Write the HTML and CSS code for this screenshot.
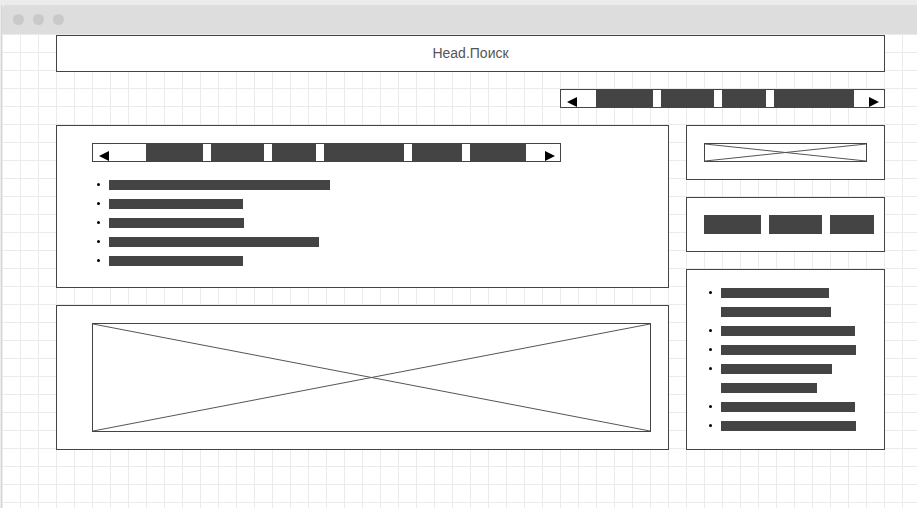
FILE: index.html
```html
<!DOCTYPE html>
<html lang="ru">
<head>
	<meta charset="UTF-8">
	<title>Макет</title>
	<link rel="stylesheet" href="styles.css">
</head>
<body>

	<div class="window">
		<div class="titlebar">
			<span class="dot"></span>
			<span class="dot"></span>
			<span class="dot"></span>
		</div>

		<div class="canvas">
			<div class="page">

				<div class="head">Head.Поиск</div>

				<div class="toolbar">
					<div class="tabs tabs-top">
						<span class="nav-prev"></span>
						<span class="tab w57"></span>
						<span class="tab w53"></span>
						<span class="tab w44"></span>
						<span class="tab w80"></span>
						<span class="nav-next"></span>
					</div>
				</div>

				<div class="main">
					<div class="col-left">
						<div class="box box-content">
							<div class="tabs tabs-wide">
								<span class="nav-prev"></span>
								<span class="tab w57"></span>
								<span class="tab w53"></span>
								<span class="tab w44"></span>
								<span class="tab w80"></span>
								<span class="tab w50"></span>
								<span class="tab w56"></span>
								<span class="nav-next"></span>
							</div>
							<ul class="bullets">
								<li><div class="lines"><span class="bar" style="width: 221px"></span></div></li>
								<li><div class="lines"><span class="bar" style="width: 134px"></span></div></li>
								<li><div class="lines"><span class="bar" style="width: 135px"></span></div></li>
								<li><div class="lines"><span class="bar" style="width: 210px"></span></div></li>
								<li><div class="lines"><span class="bar" style="width: 134px"></span></div></li>
							</ul>
						</div>

						<div class="box box-banner">
							<div class="picture picture-big">
								<svg viewBox="0 0 100 100" preserveAspectRatio="none">
									<line x1="0" y1="0" x2="100" y2="100"/>
									<line x1="0" y1="100" x2="100" y2="0"/>
								</svg>
							</div>
						</div>
					</div>

					<div class="col-right">
						<div class="box box-small">
							<div class="picture picture-small">
								<svg viewBox="0 0 100 100" preserveAspectRatio="none">
									<line x1="0" y1="0" x2="100" y2="100"/>
									<line x1="0" y1="100" x2="100" y2="0"/>
								</svg>
							</div>
						</div>

						<div class="box box-small">
							<div class="buttons">
								<span class="btn w57"></span>
								<span class="btn w53"></span>
								<span class="btn w44"></span>
							</div>
						</div>

						<div class="box box-list">
							<ul class="bullets">
								<li><div class="lines"><span class="bar" style="width: 108px"></span><span class="bar" style="width: 110px"></span></div></li>
								<li><div class="lines"><span class="bar" style="width: 134px"></span></div></li>
								<li><div class="lines"><span class="bar" style="width: 135px"></span></div></li>
								<li><div class="lines"><span class="bar" style="width: 111px"></span><span class="bar" style="width: 96px"></span></div></li>
								<li><div class="lines"><span class="bar" style="width: 134px"></span></div></li>
								<li><div class="lines"><span class="bar" style="width: 135px"></span></div></li>
							</ul>
						</div>
					</div>
				</div>

			</div>
		</div>
	</div>

</body>
</html>
```

FILE: styles.css
```css
* {
	padding: 0;
	margin: 0;
	box-sizing: border-box;
}

ul {
	list-style: none;
}

body {
	background-color: #ececec;
	font-family: "Liberation Sans", Arial, sans-serif;
	overflow: hidden;
}

/* окно браузера */
.window {
	margin: 5px 0 0 1px;
	border-left: 1px solid #d6d6d6;
}

.titlebar {
	height: 29px;
	background-color: #dddddd;
	border-top-left-radius: 4px;
	display: flex;
	gap: 9px;
	padding: 9px 0 0 11px;
}

.dot {
	width: 11px;
	height: 11px;
	border-radius: 50%;
	background-color: #c9c9c9;
}

/* сетка 18px */
.canvas {
	height: 474px;
	background-color: #fff;
	background-image:
		linear-gradient(to right, #ebebeb 1px, transparent 1px),
		linear-gradient(to bottom, #ebebeb 1px, transparent 1px);
	background-size: 18px 18px;
	padding: 1px 0 0 54px;
	overflow: hidden;
}

.page {
	width: 829px;
}

.head {
	height: 37px;
	border: 1px solid #444;
	background-color: #fff;
	text-align: center;
	line-height: 35px;
	font-size: 14px;
	color: #555;
}

.toolbar {
	display: flex;
	justify-content: flex-end;
	margin-top: 17px;
}

.main {
	display: flex;
	gap: 17px;
	margin-top: 17px;
}

.col-left {
	width: 613px;
	display: flex;
	flex-direction: column;
	gap: 17px;
}

.col-right {
	width: 199px;
	display: flex;
	flex-direction: column;
	gap: 17px;
}

.box {
	border: 1px solid #444;
	background-color: #fff;
	padding: 17px 35px;
}

.box-content {
	height: 163px;
}

.box-banner {
	height: 145px;
}

.box-small {
	height: 55px;
	padding: 17px;
}

.box-list {
	height: 181px;
	padding: 13px 17px;
}

/* вкладки со стрелками */
.tabs {
	display: flex;
	height: 19px;
	border: 1px solid #444;
	background-color: #fff;
}

.tabs-top {
	width: 325px;
}

.tabs-wide {
	width: 469px;
}

.tab {
	flex: none;
	background-color: #444;
}

.tab + .tab {
	margin-left: 8px;
}

.nav-prev {
	flex: none;
}

.tabs-top .nav-prev {
	width: 35px;
}

.tabs-wide .nav-prev {
	width: 53px;
}

.nav-next {
	flex: 1;
	display: flex;
	justify-content: flex-end;
}

.nav-prev::before,
.nav-next::before {
	content: "";
	display: block;
	width: 0;
	height: 0;
	margin-top: 7px;
	border-top: 5px solid transparent;
	border-bottom: 5px solid transparent;
}

.nav-prev::before {
	margin-left: 6px;
	border-right: 10px solid #000;
}

.nav-next::before {
	margin-right: 5px;
	border-left: 10px solid #000;
}

.w44 { width: 44px; }
.w50 { width: 50px; }
.w53 { width: 53px; }
.w56 { width: 56px; }
.w57 { width: 57px; }
.w80 { width: 80px; }

/* списки-заглушки */
.bullets {
	padding-left: 5px;
}

.box-content .bullets {
	margin-top: 13px;
}

.bullets li {
	display: flex;
}

.bullets li::before {
	content: "";
	flex: none;
	width: 3px;
	height: 3px;
	border-radius: 50%;
	background-color: #000;
	margin: 8px 9px 0 0;
}

.lines {
	display: flex;
	flex-direction: column;
}

.bar {
	display: block;
	height: 10px;
	margin: 5px 0 4px;
	background-color: #444;
}

/* картинка-заглушка */
.picture {
	border: 1px solid #444;
	background-color: #fff;
}

.picture svg {
	display: block;
	width: 100%;
	height: 100%;
}

.picture line {
	stroke: #555;
	stroke-width: 1;
	vector-effect: non-scaling-stroke;
}

.picture-big {
	width: 559px;
	height: 109px;
}

.picture-small {
	width: 163px;
	height: 19px;
}

.buttons {
	display: flex;
	gap: 8px;
}

.btn {
	flex: none;
	height: 19px;
	background-color: #444;
}
```
